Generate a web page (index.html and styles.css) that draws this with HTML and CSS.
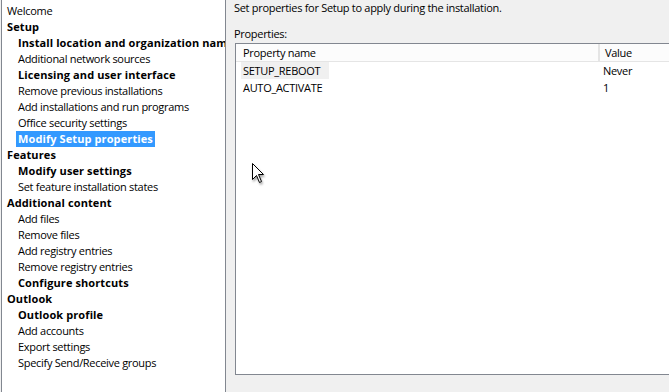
FILE: index.html
```html
<!DOCTYPE html>
<html lang="en">
<head>
    <meta charset="UTF-8">
    <title>Setup properties</title>
    <link rel="stylesheet" href="styles.css">
</head>
<body>
    <div class="window">
        <div class="tree">
            <div class="item top">Welcome</div>
            <div class="item top bold">Setup</div>
            <div class="item bold">Install location and organization name</div>
            <div class="item">Additional network sources</div>
            <div class="item bold">Licensing and user interface</div>
            <div class="item">Remove previous installations</div>
            <div class="item">Add installations and run programs</div>
            <div class="item">Office security settings</div>
            <div class="item bold"><span class="selected">Modify Setup properties</span></div>
            <div class="item top bold">Features</div>
            <div class="item bold">Modify user settings</div>
            <div class="item">Set feature installation states</div>
            <div class="item top bold">Additional content</div>
            <div class="item">Add files</div>
            <div class="item">Remove files</div>
            <div class="item">Add registry entries</div>
            <div class="item">Remove registry entries</div>
            <div class="item bold">Configure shortcuts</div>
            <div class="item top bold">Outlook</div>
            <div class="item bold">Outlook profile</div>
            <div class="item">Add accounts</div>
            <div class="item">Export settings</div>
            <div class="item">Specify Send/Receive groups</div>
        </div>

        <div class="pane">
            <p class="intro">Set properties for Setup to apply during the installation.</p>
            <p class="label">Properties:</p>
            <div class="listview">
                <div class="row header">
                    <div class="col name">Property name</div>
                    <div class="col value">Value</div>
                </div>
                <div class="row">
                    <div class="col name"><span class="hover">SETUP_REBOOT</span></div>
                    <div class="col value">Never</div>
                </div>
                <div class="row">
                    <div class="col name">AUTO_ACTIVATE</div>
                    <div class="col value">1</div>
                </div>
                <svg class="cursor" width="14" height="23" viewBox="0 0 14 23">
                    <path d="M1.5 1.5 L1.5 17.5 L5.5 13.5 L8.5 20.5 L10.5 19.5 L7.5 12.5 L12.5 12.5 Z" fill="#fff" stroke="#000" stroke-width="1" stroke-linejoin="miter"/>
                </svg>
            </div>
        </div>
    </div>
</body>
</html>
```

FILE: styles.css
```css
body {
    margin: 0;
    background: #f0f0f0;
    font-family: "Open Sans", "Noto Sans", sans-serif;
    font-size: 11px;
    letter-spacing: -0.3px;
    color: #000;
}
.window {
    display: flex;
    height: 392px;
    overflow: hidden;
}
.tree {
    width: 223px;
    margin-left: 1px;
    padding-top: 3px;
    background: #fff;
    border-left: 1px solid #828790;
    border-right: 1px solid #828790;
    overflow: hidden;
    white-space: nowrap;
}
.item {
    height: 16px;
    line-height: 16px;
    padding-left: 16px;
}
.item.top {
    padding-left: 5px;
}
.bold {
    font-weight: bold;
    letter-spacing: 0.1px;
}
.selected {
    display: inline-block;
    background: #3399ff;
    color: #fff;
    padding: 0 2px;
    margin-left: -2px;
}
.pane {
    flex: 1;
    padding-left: 8px;
}
.intro {
    margin: 0;
    height: 16px;
    line-height: 16px;
}
.label {
    margin: 10px 0 0;
    height: 16px;
    line-height: 16px;
}
.listview {
    position: relative;
    margin-top: 1px;
    margin-left: 1px;
    height: 330px;
    background: #fff;
    border-left: 1px solid #828790;
    border-top: 1px solid #828790;
    border-bottom: 1px solid #828790;
}
.row {
    display: flex;
    height: 17px;
    line-height: 17px;
}
.row.header {
    background: #fcfcfc;
    border-bottom: 1px solid #e5e5e5;
}
.col.name {
    width: 355px;
    padding-left: 7px;
}
.header .col.name {
    border-right: 2px solid #e5e5e5;
}
.col.value {
    padding-left: 5px;
}
.hover {
    display: inline-block;
    background: #f0f0f0;
    padding: 0 9px 0 2px;
    margin-left: -2px;
}
.cursor {
    position: absolute;
    left: 15px;
    top: 118px;
    filter: drop-shadow(1px 2px 1px rgba(0, 0, 0, 0.35));
}
```
